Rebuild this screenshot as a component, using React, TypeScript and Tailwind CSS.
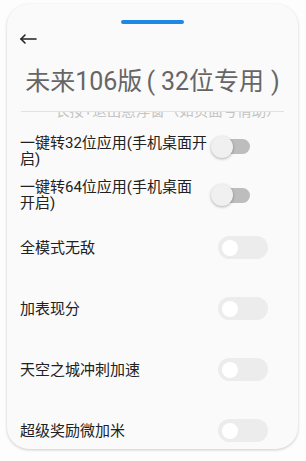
import * as React from "react";

type Row = Readonly<{
  label: React.ReactNode;
  kind: "legacy" | "pill";
  height: string;
}>;

const rows: Row[] = [
  {
    label: (
      <>
        一键转32位应用(手机桌面开
        <br />
        启)
      </>
    ),
    kind: "legacy",
    height: "h-[44px]",
  },
  {
    label: (
      <>
        一键转64位应用(手机桌面
        <br />
        开启)
      </>
    ),
    kind: "legacy",
    height: "h-[44px]",
  },
  { label: "全模式无敌", kind: "pill", height: "h-[61px]" },
  { label: "加表现分", kind: "pill", height: "h-[61px]" },
  { label: "天空之城冲刺加速", kind: "pill", height: "h-[61px]" },
  { label: "超级奖励微加米", kind: "pill", height: "h-[61px]" },
];

// old material switch: grey track with the thumb sitting on the left
function LegacySwitch({ up }: { up?: boolean }) {
  return (
    <div className={`relative ml-auto mr-[18px] h-[22px] w-[39px] shrink-0 ${up ? "mb-[9px]" : ""}`}>
      <div className="absolute right-0 top-[3.5px] h-[15px] w-[35px] rounded-full bg-[#bdbdbd]" />
      <div className="absolute left-0 top-0 h-[22px] w-[22px] rounded-full bg-[#f0f0f0] shadow-[0_1px_3px_rgba(0,0,0,0.3)]" />
    </div>
  );
}

function PillSwitch() {
  return (
    <div className="ml-auto flex h-[23px] w-[50px] shrink-0 items-center rounded-full bg-[#ececec] pl-[4px]">
      <div className="h-[16px] w-[16px] rounded-full bg-white" />
    </div>
  );
}

export default function App() {
  return (
    <div className="h-[461px] w-[306px] overflow-hidden bg-[#fdfdfd] pl-[7px] pt-[4px] font-['Roboto','Noto_Sans_CJK_SC',sans-serif]">
      <div className="flex h-[445px] w-[291px] flex-col overflow-hidden rounded-[22px] bg-[#fafafa] shadow-[0_1px_3px_rgba(0,0,0,0.2)]">
        <div className="mx-auto mt-[16px] h-[4px] w-[63px] shrink-0 rounded-full bg-[#1e88e5]" />

        <div className="ml-[12px] mt-[6px] h-[18px] w-[18px] shrink-0">
          <svg viewBox="0 0 18 18" width="18" height="18" fill="none" stroke="#222" strokeWidth="1.6" strokeLinecap="round" strokeLinejoin="round">
            <path d="M2 9h15" />
            <path d="M6 5 2 9l4 4" />
          </svg>
        </div>

        <h1 className="mt-[19px] shrink-0 whitespace-nowrap text-center text-[25px] leading-[30px] font-normal text-[#666]">
          未来106版<span className="ml-[4px] mr-[6px] inline-block">(</span>32位专用
          <span className="ml-[7px] inline-block">)</span>
        </h1>

        {/* scrolled list: the hint line is half hidden under the top edge */}
        <div className="mx-[14px] mt-[14px] h-[8px] shrink-0 overflow-hidden border-t border-[#e2e2e2]">
          <p className="-mt-[7px] pl-[34px] text-[14.5px] leading-[14px] text-[#c4c4c4]">
            长按+退出悬浮窗（如页面号情助）
          </p>
        </div>

        <div className="mt-[10px] flex flex-col">
          {rows.map((row, i) => (
            <div key={i} className={`flex shrink-0 items-center pl-[13px] pr-[30px] ${row.height}`}>
              <span className="text-[15px] leading-[16px] text-[#212121]">{row.label}</span>
              {row.kind === "legacy" ? <LegacySwitch up={i === 0} /> : <PillSwitch />}
            </div>
          ))}
        </div>
      </div>
    </div>
  );
}
